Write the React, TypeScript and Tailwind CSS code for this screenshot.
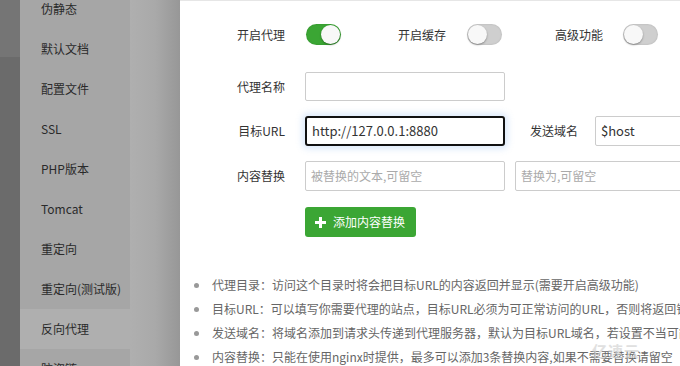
import React from "react";

const font = { fontFamily: '"Noto Sans CJK SC", "Open Sans", sans-serif' };

const sideItems = [
  "伪静态",
  "默认文档",
  "配置文件",
  "SSL",
  "PHP版本",
  "Tomcat",
  "重定向",
  "重定向(测试版)",
  "反向代理",
  "防盗链",
];

function Toggle({ on }: { on: boolean }) {
  return (
    <div
      className={
        "relative w-[35px] h-[21px] rounded-full shadow-[inset_0_0_2px_rgba(0,0,0,0.15)] " +
        (on ? "bg-[#3ba634]" : "bg-[#cfcfcf]")
      }
    >
      <div
        className={
          "absolute top-[1px] w-[19px] h-[19px] rounded-full bg-[#f8f8f8] shadow-[0_1px_2px_rgba(0,0,0,0.35)] " +
          (on ? "right-[1px]" : "left-[1px]")
        }
      />
    </div>
  );
}

const notes = [
  "代理目录：访问这个目录时将会把目标URL的内容返回并显示(需要开启高级功能)",
  "目标URL：可以填写你需要代理的站点，目标URL必须为可正常访问的URL，否则将返回错误",
  "发送域名：将域名添加到请求头传递到代理服务器，默认为目标URL域名，若设置不当可能导致代理无法正常运行",
  "内容替换：只能在使用nginx时提供，最多可以添加3条替换内容,如果不需要替换请留空",
];

export default function App() {
  return (
    <div
      className="relative w-[680px] h-[366px] overflow-hidden flex bg-white"
      style={font}
    >
      {/* left dark strip */}
      <div className="w-[20px] flex flex-col shrink-0">
        <div className="h-[57px] bg-[#757575]" />
        <div className="flex-1 bg-[#6b6b6b]" />
      </div>
      {/* sidebar */}
      <div className="w-[160px] shrink-0 flex bg-[#a7a7a7]">
        <div className="w-[110px] flex flex-col mt-[-11px] bg-[#a6a6a6]">
          {sideItems.map((s, i) => (
            <div
              key={s}
              className={
                "h-[40px] shrink-0 flex items-center pl-[21px] text-[12px] text-[#2a2a2a] " +
                (i === 8 ? "bg-[#afafaf] w-[160px]" : "")
              }
            >
              {s}
            </div>
          ))}
        </div>
        <div className="flex-1 bg-gradient-to-r from-[#afafaf] via-[#a9a9a9] to-[#979797]" />
      </div>
      {/* modal */}
      <div className="flex-1 flex flex-col bg-white relative">
        <div className="h-[6px] bg-[#f5f5f5] border-b border-[#e6e6e6]" />
        <div className="flex items-center mt-[23px] h-[21px] text-[12px] text-[#333]">
          <div className="w-[105px] text-right">开启代理</div>
          <div className="ml-[21px]">
            <Toggle on />
          </div>
          <div className="ml-[57px]">开启缓存</div>
          <div className="ml-[21px]">
            <Toggle on={false} />
          </div>
          <div className="ml-[53px]">高级功能</div>
          <div className="ml-[20px]">
            <Toggle on={false} />
          </div>
        </div>
        <div className="flex items-center mt-[27px] text-[12px] text-[#333]">
          <div className="w-[105px] text-right">代理名称</div>
          <input
            className="ml-[20px] w-[200px] h-[29px] border border-[#cccccc] rounded-[2px] outline-none px-[6px] text-[13px]"
            defaultValue=""
          />
        </div>
        <div className="flex items-center mt-[15px] text-[12px] text-[#333]">
          <div className="w-[105px] text-right">目标URL</div>
          <div className="ml-[20px] w-[200px] h-[30px] border-2 border-[#111] rounded-[3px] shadow-[0_0_6px_3px_rgba(120,170,240,0.25)] flex items-center pl-[5px] text-[13px] text-[#333]">
            http://127.0.0.1:8880
          </div>
          <div className="ml-[25px] w-[50px]">发送域名</div>
          <div className="ml-[15px] w-[120px] h-[30px] border border-[#cccccc] rounded-[2px] flex items-center pl-[5px] text-[13px] text-[#333] shrink-0">
            $host
          </div>
        </div>
        <div className="flex items-center mt-[15px] text-[12px] text-[#333]">
          <div className="w-[105px] text-right">内容替换</div>
          <div className="ml-[20px] w-[200px] h-[30px] border border-[#cccccc] rounded-[2px] flex items-center pl-[5px] text-[12px] text-[#aaa] shrink-0">
            被替换的文本,可留空
          </div>
          <div className="ml-[10px] w-[200px] h-[30px] border border-[#cccccc] rounded-[2px] flex items-center pl-[5px] text-[12px] text-[#aaa] shrink-0">
            替换为,可留空
          </div>
        </div>
        <div className="flex mt-[16px]">
          <div className="ml-[125px] w-[111px] h-[30px] rounded-[3px] bg-[#3ba634] flex items-center pl-[10px] text-white text-[12px]">
            <svg width="11" height="11" viewBox="0 0 11 11" className="mr-[7px]">
              <rect x="4" y="0" width="3" height="11" fill="white" />
              <rect x="0" y="4" width="11" height="3" fill="white" />
            </svg>
            添加内容替换
          </div>
        </div>
        <ul className="mt-[36px] flex flex-col">
          {notes.map((n) => (
            <li
              key={n}
              className="h-[24px] flex items-center whitespace-nowrap text-[12px] text-[#666]"
            >
              <span className="ml-[14px] w-[5px] h-[5px] rounded-full bg-[#999] shrink-0" />
              <span className="ml-[13px]">{n}</span>
            </li>
          ))}
        </ul>
        <div className="absolute left-[412px] top-[340px] text-[15px] font-bold text-[#d4d4d4] opacity-70 tracking-[1px]">
          亿速云
        </div>
      </div>
    </div>
  );
}
